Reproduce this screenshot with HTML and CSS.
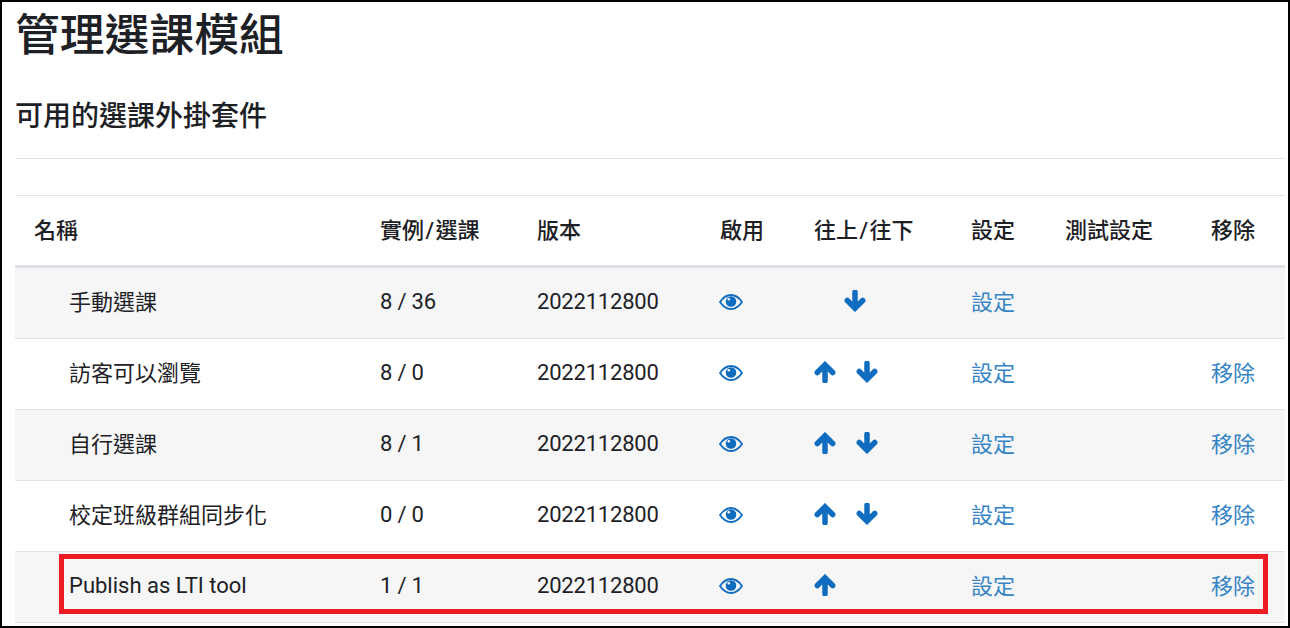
FILE: index.html
```html
<!DOCTYPE html>
<html>
  <head>
    <title>管理選課模組</title>
    <link rel="stylesheet" href="styles.css">
  </head>

  <body>
    <svg class="defs" width="0" height="0">
      <symbol id="eye" viewBox="0 0 24 16">
        <path d="M1 8C4 3.500 7.500 1 12 1s8 2.500 11 7c-3 4.500-6.500 7-11 7S4 12.500 1 8z" fill="none" stroke="currentColor" stroke-width="1.800"/>
        <circle cx="12" cy="7.500" r="5.300" fill="currentColor"/>
        <circle cx="9.800" cy="5.300" r="1.300" fill="#fff"/>
      </symbol>
      <symbol id="up" viewBox="0 0 20 20">
        <path d="M10 18V4M3 10.500L10 3.500l7 7" fill="none" stroke="currentColor" stroke-width="5" stroke-linejoin="miter" stroke-linecap="round"/>
      </symbol>
      <symbol id="down" viewBox="0 0 20 20">
        <path d="M10 2v14M3 9.500l7 7 7-7" fill="none" stroke="currentColor" stroke-width="5" stroke-linejoin="miter" stroke-linecap="round"/>
      </symbol>
    </svg>

    <div class="page">
      <h1>管理選課模組</h1>
      <h2>可用的選課外掛套件</h2>
      <hr>

      <table class="plugins">
        <colgroup>
          <col class="c-name"><col class="c-count"><col class="c-version"><col class="c-enable">
          <col class="c-move"><col class="c-settings"><col class="c-test"><col class="c-remove">
        </colgroup>
        <thead>
          <tr>
            <th>名稱</th><th>實例<span class="slash">/</span>選課</th><th>版本</th><th>啟用</th>
            <th>往上<span class="slash">/</span>往下</th><th>設定</th><th>測試設定</th><th>移除</th>
          </tr>
        </thead>
        <tbody>
          <tr>
            <td class="name">手動選課</td>
            <td class="num">8 / 36</td>
            <td class="num">2022112800</td>
            <td class="enable"><svg class="eye"><use href="#eye"/></svg></td>
            <td class="move center"><svg class="arrow"><use href="#down"/></svg></td>
            <td><a href="#">設定</a></td>
            <td></td>
            <td></td>
          </tr>
          <tr>
            <td class="name">訪客可以瀏覽</td>
            <td class="num">8 / 0</td>
            <td class="num">2022112800</td>
            <td class="enable"><svg class="eye"><use href="#eye"/></svg></td>
            <td class="move"><svg class="arrow"><use href="#up"/></svg><svg class="arrow"><use href="#down"/></svg></td>
            <td><a href="#">設定</a></td>
            <td></td>
            <td><a href="#">移除</a></td>
          </tr>
          <tr>
            <td class="name">自行選課</td>
            <td class="num">8 / 1</td>
            <td class="num">2022112800</td>
            <td class="enable"><svg class="eye"><use href="#eye"/></svg></td>
            <td class="move"><svg class="arrow"><use href="#up"/></svg><svg class="arrow"><use href="#down"/></svg></td>
            <td><a href="#">設定</a></td>
            <td></td>
            <td><a href="#">移除</a></td>
          </tr>
          <tr>
            <td class="name">校定班級群組同步化</td>
            <td class="num">0 / 0</td>
            <td class="num">2022112800</td>
            <td class="enable"><svg class="eye"><use href="#eye"/></svg></td>
            <td class="move"><svg class="arrow"><use href="#up"/></svg><svg class="arrow"><use href="#down"/></svg></td>
            <td><a href="#">設定</a></td>
            <td></td>
            <td><a href="#">移除</a></td>
          </tr>
          <tr>
            <td class="name latin">Publish as LTI tool</td>
            <td class="num">1 / 1</td>
            <td class="num">2022112800</td>
            <td class="enable"><svg class="eye"><use href="#eye"/></svg></td>
            <td class="move"><svg class="arrow"><use href="#up"/></svg></td>
            <td><a href="#">設定</a></td>
            <td></td>
            <td><a href="#">移除</a></td>
          </tr>
        </tbody>
      </table>

      <!-- red callout over the last row -->
      <div class="callout"></div>
    </div>
  </body>
</html>
```

FILE: styles.css
```css
html, body {
  margin: 0;
  height: 100%;
}
body {
  background: #fff;
  color: #1d2125;
  font-family: Roboto, "Noto Sans CJK TC", sans-serif;
  font-size: 22px;
  overflow: hidden;
}
.defs {
  position: absolute;
}

/* page frame */
.page {
  position: relative;
  box-sizing: border-box;
  height: 628px;
  padding: 0 3px 0 13px;
  border: 2px solid #000;
  overflow: hidden;
}
h1 {
  margin: 0;
  padding-top: 5px;
  font-size: 44.800px;
  font-weight: 500;
  line-height: 58px;
  height: 65px;
}
h2 {
  margin: 0;
  padding-top: 26px;
  font-size: 28px;
  font-weight: 500;
  line-height: 38px;
}
hr {
  margin: 22px 0 36px;
  border: 0;
  border-top: 1px solid #e3e3e3;
}

/* table */
.plugins {
  table-layout: fixed;
  border-collapse: collapse;
  width: 1270px;
}
.c-name { width: 347px; }
.c-count { width: 157px; }
.c-version { width: 183px; }
.c-enable { width: 94px; }
.c-move { width: 158px; }
.c-settings { width: 94px; }
.c-test { width: 145px; }
.c-remove { width: 92px; }

.plugins th, .plugins td {
  padding: 0 0 6px 18px;
  text-align: left;
  white-space: nowrap;
  vertical-align: middle;
}
.plugins th {
  height: 63px;
  font-weight: 500;
  border-top: 1px solid #e3e3e3;
  border-bottom: 3px solid #dee2e6;
}
.plugins th:first-child {
  padding-left: 19px;
}
.plugins th:nth-child(6), .plugins th:nth-child(7),
.plugins td:nth-child(6) {
  padding-left: 17px;
}
.plugins td {
  height: 64px;
  border-bottom: 1px solid #dee2e6;
}
.plugins tbody tr:nth-child(odd) {
  background: #f6f6f7;
}
.plugins td.name {
  padding-left: 54px;
}
.plugins td.num {
  padding-bottom: 3px;
  letter-spacing: -0.200px;
}
.plugins td.latin {
  padding-bottom: 4px;
}
.plugins a {
  color: #3584c5;
  text-decoration: none;
}
.slash {
  margin: 0 1.500px;
}

/* icons */
.plugins td.enable {
  padding: 0 0 2px 17px;
}
.eye {
  display: block;
  width: 24px;
  height: 16px;
  color: #0f6cbf;
}
.plugins td.move {
  padding-bottom: 4px;
  color: #0f6cbf;
  line-height: 0;
}
.arrow {
  display: inline-block;
  width: 22px;
  height: 22px;
  vertical-align: middle;
}
.arrow + .arrow {
  margin-left: 20px;
}
.move.center .arrow {
  margin-left: 30px;
}

.callout {
  position: absolute;
  left: 57px;
  top: 552px;
  width: 1209px;
  height: 60px;
  box-sizing: border-box;
  border: 5px solid #ed1c24;
}
```
